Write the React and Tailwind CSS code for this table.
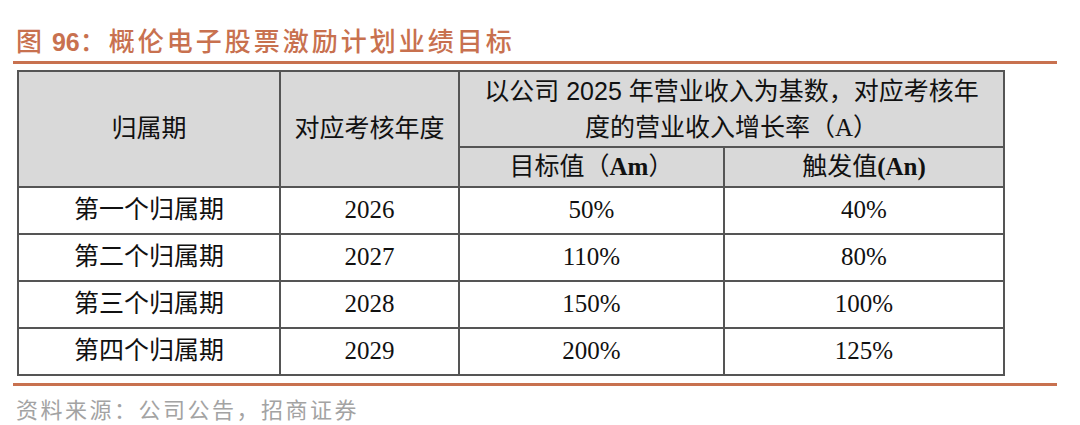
import React from "react";

const rows = [
  { period: "第一个归属期", year: "2026", target: "50%", trigger: "40%" },
  { period: "第二个归属期", year: "2027", target: "110%", trigger: "80%" },
  { period: "第三个归属期", year: "2028", target: "150%", trigger: "100%" },
  { period: "第四个归属期", year: "2029", target: "200%", trigger: "125%" },
];

const cell = "border-2 border-[#555] text-center align-middle p-0";

const App = () => {
  return (
    <div className="w-[1080px] h-[425px] bg-white pt-[27px] pl-[13px] overflow-hidden">
      <div className="w-[1044px]">
        {/* Title */}
        <div className="pl-[3px] h-[30px] leading-[30px] text-[26px] text-[#c8714f] whitespace-nowrap font-['Liberation_Sans','Noto_Sans_CJK_SC',sans-serif]">
          <span className="tracking-[3px] font-medium">图</span>
          <span className="font-bold text-[25px]"> 96</span>
          <span className="tracking-[3px] font-medium">：概伦电子股票激励计划业绩目标</span>
        </div>
        <div className="mt-[4px] h-[3px] bg-[#c8714f]" />

        {/* Table */}
        <table className="ml-[4px] mt-[6px] w-[986px] table-fixed border-collapse text-[#111] text-[25px]">
          <colgroup>
            <col className="w-[262px]" />
            <col className="w-[179px]" />
            <col className="w-[265px]" />
            <col className="w-[280px]" />
          </colgroup>
          <thead className="bg-[#d9d9d9] font-['Liberation_Sans','Noto_Sans_CJK_SC',sans-serif]">
            <tr className="h-[76px]">
              <td rowSpan={2} className={cell}>归属期</td>
              <td rowSpan={2} className={cell}>对应考核年度</td>
              <td colSpan={2} className={`${cell} leading-[36px]`}>
                以公司 2025 年营业收入为基数，对应考核年
                <br />
                度的营业收入增长率（<span className="font-['Liberation_Serif',serif]">A</span>）
              </td>
            </tr>
            <tr className="h-[39px]">
              <td className={cell}>
                目标值（<span className="font-bold font-['Liberation_Serif',serif]">Am</span>）
              </td>
              <td className={cell}>
                触发值<span className="font-bold font-['Liberation_Serif',serif]">(An)</span>
              </td>
            </tr>
          </thead>
          <tbody className="font-['Liberation_Serif','Noto_Sans_CJK_SC',serif]">
            {rows.map((r) => (
              <tr key={r.year} className="h-[47px]">
                <td className={cell}>{r.period}</td>
                <td className={cell}>{r.year}</td>
                <td className={cell}>{r.target}</td>
                <td className={cell}>{r.trigger}</td>
              </tr>
            ))}
          </tbody>
        </table>

        <div className="mt-[7px] h-[3px] bg-[#c8714f]" />
        {/* Source */}
        <div className="pl-[3px] mt-[7px] h-[30px] leading-[30px] text-[22px] tracking-[2.5px] text-[#a3a3a3] whitespace-nowrap font-['Noto_Sans_CJK_SC',sans-serif]">
          资料来源：公司公告，招商证券
        </div>
      </div>
    </div>
  );
};

export default App;
